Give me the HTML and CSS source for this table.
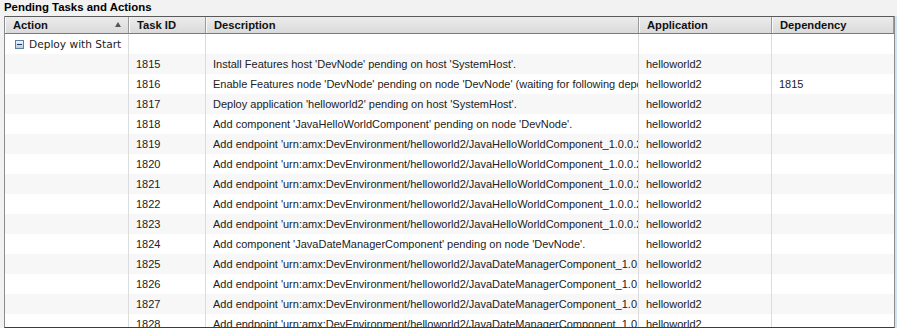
FILE: index.html
```html
<!DOCTYPE html>
<html>
<head>
<meta charset="utf-8">
<link rel="stylesheet" href="styles.css">
</head>
<body>
<div class="panel">
  <div class="title">Pending Tasks and Actions</div>
  <div class="grid">
    <div class="row head">
      <div class="cell c1">Action<span class="sort"></span></div>
      <div class="cell c2">Task ID</div>
      <div class="cell c3">Description</div>
      <div class="cell c4">Application</div>
      <div class="cell c5">Dependency</div>
    </div>
    <div class="row">
      <div class="cell c1 group"><span class="toggle"></span>Deploy with Start</div>
      <div class="cell c2"></div><div class="cell c3"></div><div class="cell c4"></div><div class="cell c5"></div>
    </div>
    <div class="row alt">
      <div class="cell c1"></div><div class="cell c2">1815</div>
      <div class="cell c3"><span class="clip">Install Features host 'DevNode' pending on host 'SystemHost'.</span></div>
      <div class="cell c4">helloworld2</div><div class="cell c5"></div>
    </div>
    <div class="row">
      <div class="cell c1"></div><div class="cell c2">1816</div>
      <div class="cell c3"><span class="clip">Enable Features node 'DevNode' pending on node 'DevNode' (waiting for following dependencies: 1815).</span></div>
      <div class="cell c4">helloworld2</div><div class="cell c5">1815</div>
    </div>
    <div class="row alt">
      <div class="cell c1"></div><div class="cell c2">1817</div>
      <div class="cell c3"><span class="clip">Deploy application 'helloworld2' pending on host 'SystemHost'.</span></div>
      <div class="cell c4">helloworld2</div><div class="cell c5"></div>
    </div>
    <div class="row">
      <div class="cell c1"></div><div class="cell c2">1818</div>
      <div class="cell c3"><span class="clip">Add component 'JavaHelloWorldComponent' pending on node 'DevNode'.</span></div>
      <div class="cell c4">helloworld2</div><div class="cell c5"></div>
    </div>
    <div class="row alt">
      <div class="cell c1"></div><div class="cell c2">1819</div>
      <div class="cell c3"><span class="clip">Add endpoint 'urn:amx:DevEnvironment/helloworld2/JavaHelloWorldComponent_1.0.0.201011081200/HelloWorld' pending.</span></div>
      <div class="cell c4">helloworld2</div><div class="cell c5"></div>
    </div>
    <div class="row">
      <div class="cell c1"></div><div class="cell c2">1820</div>
      <div class="cell c3"><span class="clip">Add endpoint 'urn:amx:DevEnvironment/helloworld2/JavaHelloWorldComponent_1.0.0.201011081200/DateManager' pending.</span></div>
      <div class="cell c4">helloworld2</div><div class="cell c5"></div>
    </div>
    <div class="row alt">
      <div class="cell c1"></div><div class="cell c2">1821</div>
      <div class="cell c3"><span class="clip">Add endpoint 'urn:amx:DevEnvironment/helloworld2/JavaHelloWorldComponent_1.0.0.201011081200/HelloWorldPT' pending.</span></div>
      <div class="cell c4">helloworld2</div><div class="cell c5"></div>
    </div>
    <div class="row">
      <div class="cell c1"></div><div class="cell c2">1822</div>
      <div class="cell c3"><span class="clip">Add endpoint 'urn:amx:DevEnvironment/helloworld2/JavaHelloWorldComponent_1.0.0.201011081200/DateManagerPT' pending.</span></div>
      <div class="cell c4">helloworld2</div><div class="cell c5"></div>
    </div>
    <div class="row alt">
      <div class="cell c1"></div><div class="cell c2">1823</div>
      <div class="cell c3"><span class="clip">Add endpoint 'urn:amx:DevEnvironment/helloworld2/JavaHelloWorldComponent_1.0.0.201011081200/Service' pending.</span></div>
      <div class="cell c4">helloworld2</div><div class="cell c5"></div>
    </div>
    <div class="row">
      <div class="cell c1"></div><div class="cell c2">1824</div>
      <div class="cell c3"><span class="clip">Add component 'JavaDateManagerComponent' pending on node 'DevNode'.</span></div>
      <div class="cell c4">helloworld2</div><div class="cell c5"></div>
    </div>
    <div class="row alt">
      <div class="cell c1"></div><div class="cell c2">1825</div>
      <div class="cell c3"><span class="clip">Add endpoint 'urn:amx:DevEnvironment/helloworld2/JavaDateManagerComponent_1.0.0.201011081200/DateManager' pending.</span></div>
      <div class="cell c4">helloworld2</div><div class="cell c5"></div>
    </div>
    <div class="row">
      <div class="cell c1"></div><div class="cell c2">1826</div>
      <div class="cell c3"><span class="clip">Add endpoint 'urn:amx:DevEnvironment/helloworld2/JavaDateManagerComponent_1.0.0.201011081200/DateManagerPT' pending.</span></div>
      <div class="cell c4">helloworld2</div><div class="cell c5"></div>
    </div>
    <div class="row alt">
      <div class="cell c1"></div><div class="cell c2">1827</div>
      <div class="cell c3"><span class="clip">Add endpoint 'urn:amx:DevEnvironment/helloworld2/JavaDateManagerComponent_1.0.0.201011081200/Service' pending.</span></div>
      <div class="cell c4">helloworld2</div><div class="cell c5"></div>
    </div>
    <div class="row">
      <div class="cell c1"></div><div class="cell c2">1828</div>
      <div class="cell c3"><span class="clip">Add endpoint 'urn:amx:DevEnvironment/helloworld2/JavaDateManagerComponent_1.0.0.201011081200/Reference' pending.</span></div>
      <div class="cell c4">helloworld2</div><div class="cell c5"></div>
    </div>
  </div>
</div>
</body>
</html>
```
FILE: styles.css
```css
html, body {
  margin: 0;
  padding: 0;
  overflow: hidden;
}
body {
  background: #f2f2f2;
  font-family: "Liberation Sans", Arial, sans-serif;
  font-size: 11px;
  color: #222;
}
.panel {
  height: 328px;
  display: flex;
  flex-direction: column;
  overflow: hidden;
  background: #f2f2f2;
}
.title {
  height: 16px;
  line-height: 14px;
  padding-left: 4px;
  font-weight: bold;
  font-size: 11.4px;
  color: #000;
  flex: none;
}
.grid {
  flex: 1;
  margin-left: 4px;
  width: 889px;
  border-left: 1px solid #8c8c8c;
  border-right: 1px solid #8c8c8c;
  border-bottom: 1px solid #3c3c3c;
  box-shadow: 1px 0 0 #cfe3f5, 2px 0 0 #cfe3f5;
  background: #fff;
  overflow: hidden;
}
.row {
  display: grid;
  grid-template-columns: 123px 77px 433px 133px 123px;
  height: 20px;
}
.row.alt {
  background: #f7f7f7;
}
.cell {
  box-sizing: border-box;
  white-space: nowrap;
  overflow: hidden;
  line-height: 20px;
  padding-left: 7px;
}
.clip {
  display: block;
  overflow: hidden;
  text-overflow: clip;
}
.cell.c2, .cell.c3, .cell.c4, .cell.c5 {
  border-left: 1px solid #dcdcdc;
}
.head {
  height: 18px;
  box-sizing: border-box;
  border-top: 1px solid #5a5a5a;
  border-bottom: 1px solid #7a7a7a;
  background: linear-gradient(#ececec, #dadada);
}
.head .cell {
  line-height: 16px;
  font-weight: bold;
  font-size: 11.2px;
  color: #111;
  padding-left: 8px;
  position: relative;
  box-shadow: inset 1px 0 0 #fafafa;
}
.head .cell.c2, .head .cell.c3, .head .cell.c4, .head .cell.c5 {
  border-left: 1px solid #9a9a9a;
}
.head .cell.c5 {
  border-right: 1px solid #9a9a9a;
}
.sort {
  position: absolute;
  right: 7px;
  top: 5px;
  width: 0;
  height: 0;
  border-left: 3px solid transparent;
  border-right: 3px solid transparent;
  border-bottom: 5px solid #555;
}
.group {
  padding-left: 10px;
  font-family: "DejaVu Sans", Verdana, sans-serif;
  font-size: 10.6px;
  color: #222;
  display: flex;
  align-items: center;
  gap: 5px;
}
.toggle {
  width: 9px;
  height: 9px;
  box-sizing: border-box;
  border: 1px solid #5b7fa8;
  background: linear-gradient(#eef4fb, #b9cde4);
  position: relative;
  flex: none;
}
.toggle::after {
  content: "";
  position: absolute;
  left: 1px;
  top: 3px;
  width: 5px;
  height: 1px;
  background: #1d3a63;
}
```
